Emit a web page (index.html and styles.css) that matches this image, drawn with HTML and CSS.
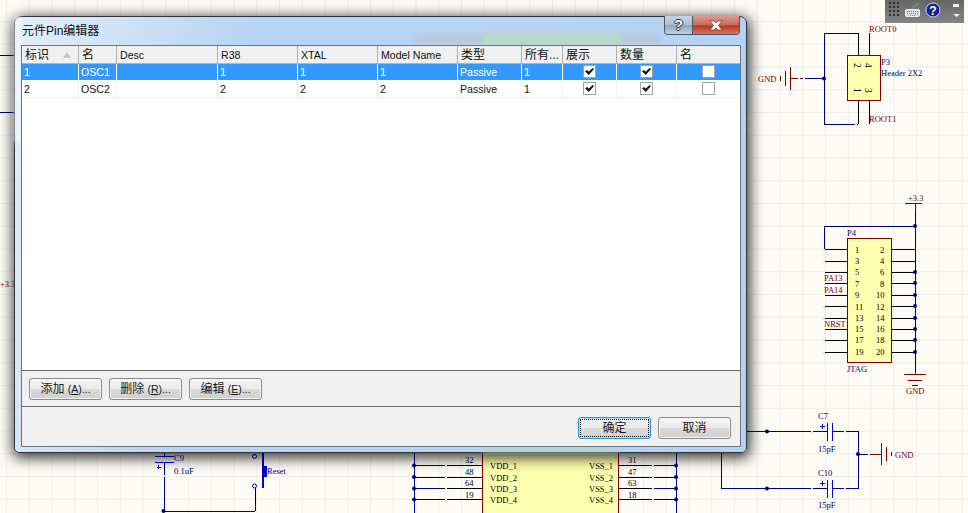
FILE: index.html
```html
<!DOCTYPE html>
<html lang="zh">
<head>
<meta charset="utf-8">
<title>元件Pin编辑器</title>
<link rel="stylesheet" href="styles.css">
</head>
<body>
<div class="desktop">
  <svg class="schematic" width="968" height="513" viewBox="0 0 968 513" xmlns="http://www.w3.org/2000/svg">
    <g class="wire">
      <path d="M0 55H15M0 112H15"/>
      <path d="M858 33H824V124H858M801 78.5H824"/>
      <path d="M824 249V226H915M915 210V372M915 272"/>
      <path d="M164.500 462V511H255"/>
      <path d="M414 453V513M414 465.500H440M414 477H440M414 488.500H440M414 499.500H440"/>
      <path d="M676 453V513M650 465.500H676M650 477H676M650 488.500H676M650 499.500H676"/>
      <path d="M721 453V488.500H827M747 431.500H827M832 431.500H852H858V488.500H832M858 454H870"/>
    </g>
    <g class="pin">
      <path d="M858.500 33V56M869.500 33V56M858.500 100V124M869.500 100V124"/>
      <path d="M825 249H847M825 261H847M825 272H847M825 283H847M825 295H847M825 306H847M825 318H847M825 329H847M825 340H847M825 352H847"/>
      <path d="M891 249H915M891 261H915M891 272H915M891 283H915M891 295H915M891 306H915M891 318H915M891 329H915M891 340H915M891 352H915"/>
      <path d="M255.500 488V511M440 465.500H482M440 477H482M440 488.500H482M440 499.500H482M618 465.500H650M618 477H650M618 488.500H650M618 499.500H650"/>
      <path d="M845 431.500H851"/>
    </g>
    <g class="power">
      <path d="M790 78.500H801M790.500 67V90M785.500 71V86M780.500 76V81"/>
      <path d="M905 203.500H922M915 203.500V212M915 372V374M904 374H926M908 380H922M912 385H918"/>
      <path d="M870 454H881M881.500 443V465M886.500 447V461M891.500 452V456"/>
    </g>
    <g class="plate">
      <path d="M155 456H174M155 462.500H174M164.500 453V456"/>
      <path d="M827.500 423V441M832.500 423V441M827.500 480V498M832.500 480V498"/>
      <path d="M822 424V429M819.500 426.500H824.500M822 481V486M819.500 483.500H824.500M158.500 465V469M156.500 467H160.500"/>
      <path class="switch" d="M263 453V488"/>
      <path class="nub" d="M265 466V477"/>
    </g>
    <circle class="terminal" cx="254.500" cy="456.500" r="2"/>
    <circle class="terminal" cx="254.500" cy="486" r="2"/>
    <g class="junction">
      <circle cx="824" cy="78.500" r="2"/><circle cx="915" cy="226" r="2"/>
      <circle cx="915" cy="272" r="2"/><circle cx="915" cy="283" r="2"/><circle cx="915" cy="295" r="2"/><circle cx="915" cy="306" r="2"/><circle cx="915" cy="318" r="2"/><circle cx="915" cy="329" r="2"/><circle cx="915" cy="340" r="2"/><circle cx="915" cy="352" r="2"/>
      <circle cx="163.500" cy="511" r="2"/>
      <circle cx="414" cy="465.500" r="2"/><circle cx="414" cy="477" r="2"/><circle cx="414" cy="488.500" r="2"/><circle cx="414" cy="499.500" r="2"/>
      <circle cx="676" cy="465.500" r="2"/><circle cx="676" cy="477" r="2"/><circle cx="676" cy="488.500" r="2"/><circle cx="676" cy="499.500" r="2"/>
      <circle cx="767" cy="431.500" r="2"/><circle cx="767" cy="488.500" r="2"/><circle cx="858" cy="454" r="2"/>
    </g>
    <g class="hint">
      <path d="M855 31h2v2h-2zM866 31h2v2h-2zM855 124h2v2h-2zM866 124h2v2h-2zM798 78h2v2h-2zM803 78h2v2h-2z"/>
      <path d="M823 249h2v2h-2zM823 261h2v2h-2zM823 306h2v2h-2zM823 318h2v2h-2zM823 340h2v2h-2zM823 352h2v2h-2z"/>
      <path d="M445 465h2v2h-2zM445 477h2v2h-2zM445 488h2v2h-2zM445 499h2v2h-2zM652 465h2v2h-2zM652 477h2v2h-2zM652 488h2v2h-2zM652 499h2v2h-2z"/>
      <path d="M811 431h2v2h-2zM844 431h2v2h-2zM811 488h2v2h-2zM844 488h2v2h-2zM868 454h2v2h-2zM163 475h2v2h-2z"/>
    </g>
    <rect class="part" x="847.500" y="55.500" width="33" height="44.500"/>
    <rect class="part" x="847.500" y="238.500" width="43.500" height="124"/>
    <rect class="part" x="482.500" y="440" width="136" height="90"/>

    <g class="t-red">
      <text x="758" y="82">GND</text><text x="869" y="32">ROOT0</text><text x="869" y="122">ROOT1</text>
      <text x="908" y="201">+3.3</text><text x="906" y="394">GND</text>
      <text x="824" y="281">PA13</text><text x="824" y="293">PA14</text><text x="824" y="327">NRST</text>
      <text x="0" y="287">+3.3</text><text x="895" y="458">GND</text>
    </g>
    <g class="t-blue">
      <text x="881" y="65">P3</text><text x="881" y="76">Header 2X2</text>
      <text x="847" y="236">P4</text><text x="847" y="372">JTAG</text>
      <text x="174" y="461">C9</text><text x="174" y="474">0.1uF</text><text x="267" y="474">Reset</text>
      <text x="818" y="419">C7</text><text x="818" y="452">15pF</text>
      <text x="818" y="476">C10</text><text x="818" y="508">15pF</text>
    </g>
    <g class="t-black">
      <text x="855" y="253">1</text><text x="855" y="264">3</text><text x="855" y="275">5</text><text x="855" y="287">7</text><text x="855" y="298">9</text>
      <text x="855" y="310">11</text><text x="855" y="321">13</text><text x="855" y="332">15</text><text x="855" y="343">17</text><text x="855" y="355">19</text>
      <text x="880" y="253">2</text><text x="880" y="264">4</text><text x="880" y="275">6</text><text x="880" y="287">8</text><text x="876" y="298">10</text>
      <text x="876" y="310">12</text><text x="876" y="321">14</text><text x="876" y="332">16</text><text x="876" y="343">18</text><text x="876" y="355">20</text>
      <text x="465" y="463">32</text><text x="465" y="475">48</text><text x="465" y="486">64</text><text x="465" y="498">19</text>
      <text x="628" y="463">31</text><text x="628" y="475">47</text><text x="628" y="486">63</text><text x="628" y="498">18</text>
      <text x="490" y="469">VDD_1</text><text x="490" y="481">VDD_2</text><text x="490" y="492">VDD_3</text><text x="490" y="503">VDD_4</text>
      <text x="589" y="469">VSS_1</text><text x="589" y="481">VSS_2</text><text x="589" y="492">VSS_3</text><text x="589" y="503">VSS_4</text>
      <text class="pin-no" transform="translate(854 63) rotate(90)">2</text><text class="pin-no" transform="translate(865 63) rotate(90)">4</text>
      <text class="pin-no" transform="translate(854 88) rotate(90)">1</text><text class="pin-no" transform="translate(865 88) rotate(90)">3</text>
    </g>
  </svg>

  <div class="tray">
    <svg class="tray-icons" width="79" height="23" viewBox="0 0 79 23" xmlns="http://www.w3.org/2000/svg">
      <g class="tray-dots">
        <rect x="4" y="2" width="2" height="2"/><rect x="8" y="2" width="2" height="2"/><rect x="12" y="2" width="2" height="2"/>
        <rect x="4" y="6" width="2" height="2"/><rect x="8" y="6" width="2" height="2"/><rect x="12" y="6" width="2" height="2"/>
        <rect x="4" y="10" width="2" height="2"/><rect x="8" y="10" width="2" height="2"/><rect x="12" y="10" width="2" height="2"/>
        <rect x="4" y="14" width="2" height="2"/><rect x="8" y="14" width="2" height="2"/><rect x="12" y="14" width="2" height="2"/>
      </g>
      <path class="tray-cord" d="M27 9C28 6 31 6 34 3"/>
      <rect class="tray-key" x="20.500" y="9.500" width="14" height="7" rx="1"/>
      <path class="tray-keys" d="M22 11.500H33M22 13.500H33M25 15.500H30"/>
      <circle class="tray-help" cx="48" cy="10" r="7"/>
      <text class="tray-q" x="48" y="14.500">?</text>
      <rect class="tray-w" x="68" y="4" width="6" height="3"/>
      <path class="tray-w" d="M68 14H75L71.500 17Z"/>
    </svg>
  </div>

  <section class="window">
    <div class="blur blur-a"></div>
    <div class="blur blur-b"></div>
    <div class="blur blur-c"></div>
    <div class="blur blur-d"></div>
    <header class="titlebar">
      <h1 class="title">元件Pin编辑器</h1>
      <div class="caption">
        <button class="cap cap-help" type="button">?</button>
        <button class="cap cap-close" type="button">
          <svg width="18" height="11" viewBox="0 0 18 11" xmlns="http://www.w3.org/2000/svg"><path class="x-mark" d="M3 1H7L9 3L11 1H15L11.500 5.500L15 10H11L9 8L7 10H3L6.500 5.500Z"/></svg>
        </button>
      </div>
    </header>
    <div class="client">
      <div class="grid">
        <div class="row head">
          <div class="cell cjk">标识<span class="sort"></span></div>
          <div class="cell cjk">名</div>
          <div class="cell">Desc</div>
          <div class="cell">R38</div>
          <div class="cell">XTAL</div>
          <div class="cell">Model Name</div>
          <div class="cell cjk">类型</div>
          <div class="cell cjk">所有...</div>
          <div class="cell cjk">展示</div>
          <div class="cell cjk">数量</div>
          <div class="cell cjk">名</div>
        </div>
        <div class="row selected">
          <div class="cell">1</div>
          <div class="cell">OSC1</div>
          <div class="cell"></div>
          <div class="cell">1</div>
          <div class="cell">1</div>
          <div class="cell">1</div>
          <div class="cell">Passive</div>
          <div class="cell">1</div>
          <div class="cell center"><span class="check on"></span></div>
          <div class="cell center"><span class="check on"></span></div>
          <div class="cell center"><span class="check"></span></div>
        </div>
        <div class="row">
          <div class="cell">2</div>
          <div class="cell">OSC2</div>
          <div class="cell"></div>
          <div class="cell">2</div>
          <div class="cell">2</div>
          <div class="cell">2</div>
          <div class="cell">Passive</div>
          <div class="cell">1</div>
          <div class="cell center"><span class="check on"></span></div>
          <div class="cell center"><span class="check on"></span></div>
          <div class="cell center"><span class="check"></span></div>
        </div>
      </div>
      <div class="edit-bar">
        <button class="btn" type="button">添加 <span class="key">(<u>A</u>)...</span></button>
        <button class="btn" type="button">删除 <span class="key">(<u>R</u>)...</span></button>
        <button class="btn" type="button">编辑 <span class="key">(<u>E</u>)...</span></button>
      </div>
      <div class="dialog-bar">
        <button class="btn primary" type="button">确定</button>
        <button class="btn" type="button">取消</button>
      </div>
    </div>
  </section>
</div>
</body>
</html>
```
FILE: styles.css
```css
* { box-sizing: border-box; }
html, body { margin: 0; padding: 0; }
body { width: 968px; height: 513px; overflow: hidden; }

.desktop {
  position: relative;
  width: 968px;
  height: 513px;
  overflow: hidden;
  background-color: #fdfbf6;
  background-image:
    linear-gradient(to right, #f0efe9 1px, transparent 1px),
    linear-gradient(to bottom, #f0efe9 1px, transparent 1px);
  background-size: 22.75px 22.75px;
  background-position: 6px 21px;
}

.schematic { position: absolute; left: 0; top: 0; }
.schematic path, .schematic rect { shape-rendering: crispEdges; }
.schematic text { font-family: "Liberation Serif", serif; font-size: 8.5px; }
.schematic .pin-no { font-size: 9.500px; }
.wire path { fill: none; stroke: #00007f; stroke-width: 1; }
.pin path { fill: none; stroke: #000; stroke-width: 1; }
.power path { fill: none; stroke: #800000; stroke-width: 1; }
.plate path { fill: none; stroke: #0000e0; stroke-width: 1; }
.plate .switch { stroke-width: 2; }
.plate .nub { stroke-width: 4; }
.terminal { fill: none; stroke: #0000c0; stroke-width: 1; }
.junction circle { fill: #00007f; }
.hint path { fill: #e4e6f0; }
.part { fill: #ffffb0; stroke: #800000; stroke-width: 1; }
.t-red text { fill: #800000; }
.t-blue text { fill: #00007f; }
.t-black text { fill: #000; }

.tray {
  position: absolute;
  left: 885px;
  top: 0;
  width: 79px;
  height: 23px;
  background: linear-gradient(to bottom, #666, #858585);
}
.tray-icons { display: block; }
.tray-dots rect { fill: #2f2f2f; }
.tray-cord { fill: none; stroke: #9c9c9c; }
.tray-key { fill: #d8dde2; stroke: #f0f0f0; }
.tray-keys { fill: none; stroke: #7d8790; stroke-dasharray: 1 1; }
.tray-help { fill: #12209c; stroke: #c9d4ee; stroke-width: 1; }
.tray-q { fill: #fff; font-family: "Liberation Sans", sans-serif; font-size: 12px; font-weight: 700; text-anchor: middle; }
.tray-w { fill: #f2f2f2; }

.window {
  position: absolute;
  left: 14px;
  top: 16px;
  width: 733px;
  height: 437px;
  padding: 0 5px 5px 6px;
  display: flex;
  flex-direction: column;
  overflow: visible;
  border: 1px solid #30343a;
  border-radius: 7px 7px 5px 5px;
  background: linear-gradient(100deg, #e3eefa 0, #b6d4f3 30%, #b4d3f2 100%);
  box-shadow: 1px 3px 14px 2px rgba(0, 0, 0, .78);
}
.blur { position: absolute; filter: blur(2px); }
.blur-a { left: 400px; top: 17px; width: 245px; height: 11px; background: #b6c6d8; opacity: .7; }
.blur-b { left: 468px; top: 16px; width: 138px; height: 12px; background: #bcdcc4; opacity: .8; }
.blur-c { left: 0; top: 0; width: 6px; height: 126px; background: #f0f5fb; }
.blur-d { left: 467px; bottom: 0; width: 137px; height: 5px; background: #b4d4cc; opacity: .8; }

.titlebar {
  position: relative;
  flex: none;
  height: 28px;
  display: flex;
  align-items: flex-start;
  justify-content: space-between;
}
.title {
  margin: 6px 0 0 1px;
  font: 400 12px/16px "Liberation Sans", "Noto Sans CJK SC", sans-serif;
  color: #101010;
}
.caption {
  display: flex;
  margin: -1px 1px 0 0;
  height: 19px;
  border: 1px solid #4c5560;
  border-top: 0;
  border-radius: 0 0 4px 4px;
  overflow: hidden;
}
.cap { padding: 0; border: 0; display: flex; align-items: center; justify-content: center; }
.cap-help {
  width: 28px;
  border-right: 1px solid #4c5560;
  background: linear-gradient(to bottom, #c3d4e6 0, #aebfd2 48%, #8ea6bd 52%, #b9cfe2 100%);
  color: #f6f6f6;
  font: 700 15px/16px "Liberation Sans", sans-serif;
  text-shadow: 1px 0 0 #333, -1px 0 0 #333, 0 1px 0 #333, 0 -1px 0 #333;
}
.cap-close {
  width: 46px;
  background: linear-gradient(to bottom, #dc9a90 0, #c96a5b 48%, #b8361f 55%, #d27766 100%);
}
.x-mark { fill: #f4f4f4; stroke: #5a302a; stroke-width: .6; }

.client {
  position: relative;
  flex: 1;
  min-height: 0;
  display: flex;
  flex-direction: column;
  border: 1px solid #6a7580;
  background: #f0f0f0;
}
.grid {
  flex: 1;
  min-height: 0;
  background: #fff;
  border-bottom: 1px solid #6a6a6a;
}
.row {
  display: grid;
  grid-template-columns: 57px 38px 101px 80px 80px 80px 64px 41px 54px 60px 63px;
  height: 17px;
  border-bottom: 1px solid #f0f0f0;
  font: 400 10.6px/16px "Liberation Sans", "Noto Sans CJK SC", sans-serif;
  color: #111;
}
.row.head {
  height: 18px;
  background: #f0f0f0;
  border-bottom: 1px solid #b4b4b4;
  line-height: 18px;
}
.row.selected {
  background: #3399ff;
  color: #fff;
  border-bottom-color: #fff;
}
.cell {
  position: relative;
  padding-left: 2px;
  border-right: 1px solid #f0f0f0;
  white-space: nowrap;
  overflow: hidden;
}
.row.head .cell { border-right-color: #b0b0b0; padding-left: 3px; }
.row.selected .cell { border-right-color: #fff; }
.row .cell:last-child { border-right: 0; }
.cjk { font-size: 12px; }
.center { display: flex; align-items: center; justify-content: center; padding: 0; }
.sort {
  position: absolute;
  right: 7px;
  top: 6px;
  width: 8px;
  height: 6px;
  background: #c4c4c4;
  clip-path: polygon(50% 0, 100% 100%, 0 100%);
}
.check {
  display: block;
  width: 13px;
  height: 13px;
  margin-top: -1px;
  background: #fff;
  border: 1px solid #a2a2a2;
  position: relative;
}
.check.on::after {
  content: "";
  position: absolute;
  left: 1px;
  top: 2px;
  width: 9px;
  height: 7px;
  background: #111;
  clip-path: polygon(0 45%, 25% 30%, 40% 55%, 85% 0, 100% 15%, 42% 100%);
}
.edit-bar {
  flex: none;
  height: 36px;
  display: flex;
  align-items: center;
  gap: 7px;
  padding: 0 0 0 7px;
  background: #f0f0f0;
  border-bottom: 1px solid #6e6e6e;
}
.dialog-bar {
  flex: none;
  height: 39px;
  display: flex;
  align-items: center;
  justify-content: flex-end;
  gap: 7px;
  padding: 3px 9px 0 0;
  background: #f0f0f0;
}
.btn {
  width: 73px;
  height: 22px;
  padding: 0;
  border: 1px solid #8a8a8a;
  border-radius: 3px;
  background: linear-gradient(to bottom, #f4f4f4 0, #ebebeb 48%, #dadada 52%, #cfcfcf 100%);
  box-shadow: inset 0 0 0 1px #f6f6f6;
  font: 400 12px/18px "Liberation Sans", "Noto Sans CJK SC", sans-serif;
  color: #1a1a1a;
}
.key { font-size: 10.5px; }
.btn.primary {
  border-color: #2d94d2;
  box-shadow: inset 0 0 0 1px #a8e2f7;
  outline: 1px dotted #111;
  outline-offset: -3px;
}
```
